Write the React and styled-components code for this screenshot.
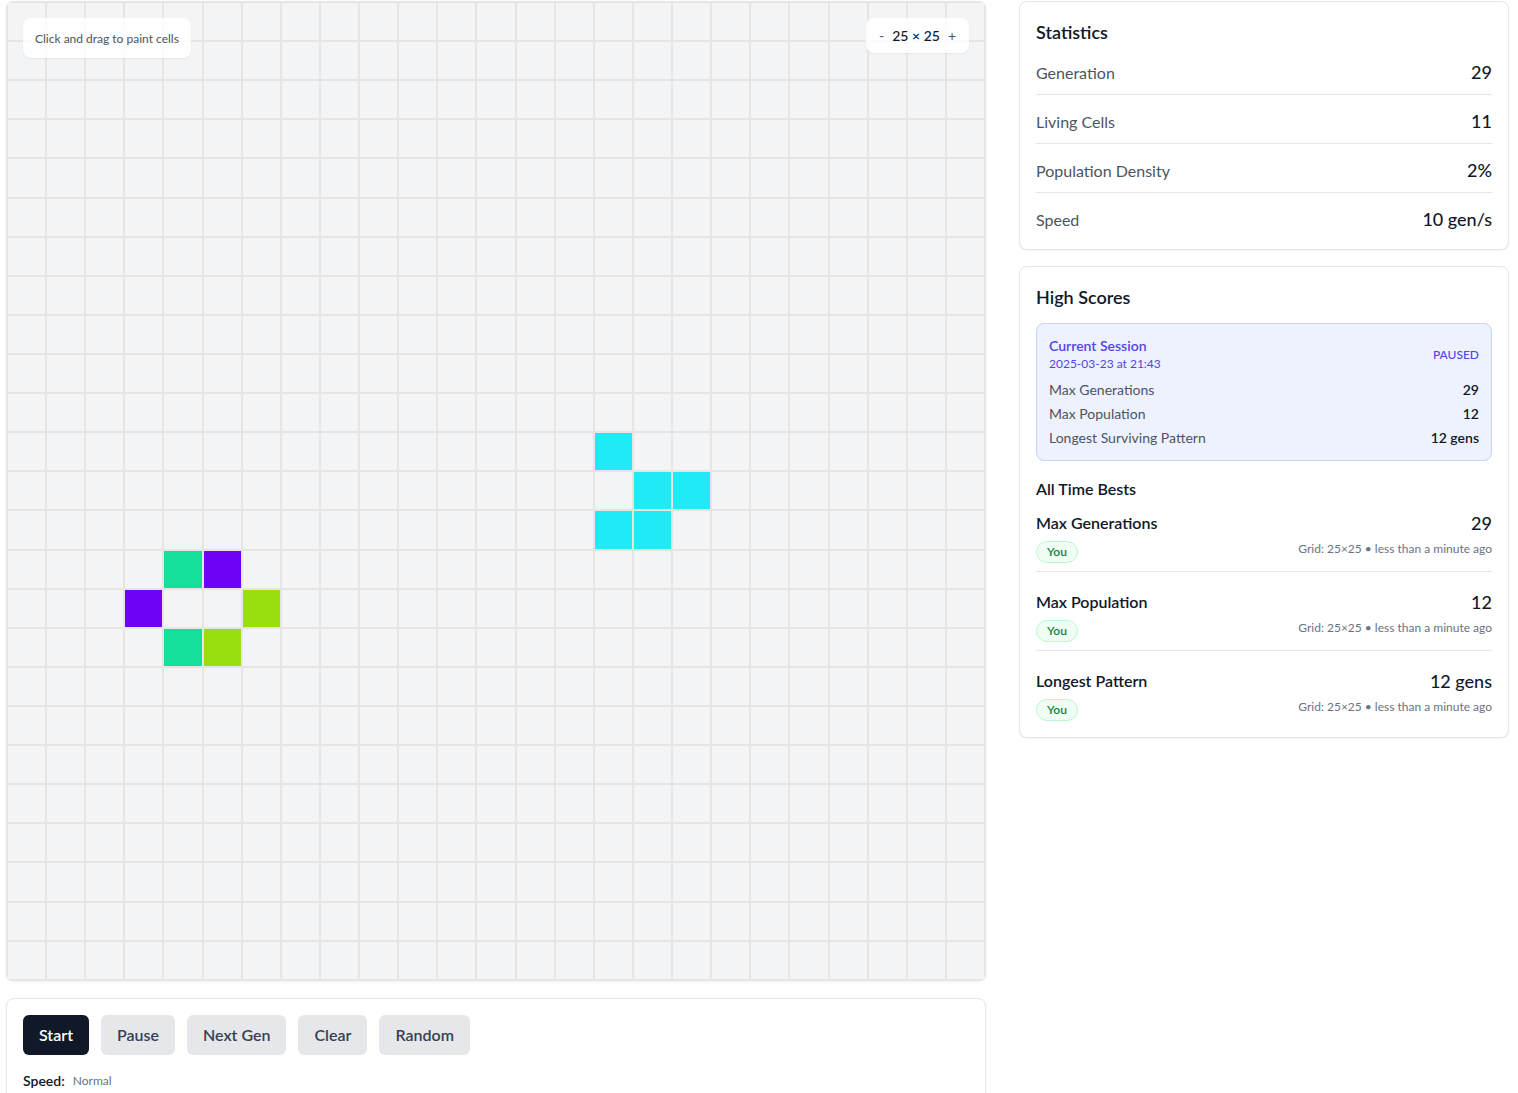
import React from 'react';
import styled, { createGlobalStyle } from 'styled-components';

const GlobalStyle = createGlobalStyle`
  * { box-sizing: border-box; }
  body {
    margin: 0;
    background: #fff;
    font-family: "Segoe UI", Lato, "Noto Sans", sans-serif;
    color: #111827;
  }
`;

const SIZE = 25;

const LIVE = {
  '11-15': '#20eaf5',
  '12-16': '#20eaf5',
  '12-17': '#20eaf5',
  '13-15': '#20eaf5',
  '13-16': '#20eaf5',
  '14-4': '#12e09b',
  '14-5': '#6e02f5',
  '15-3': '#6e02f5',
  '15-6': '#99df0f',
  '16-4': '#12e09b',
  '16-5': '#99df0f',
};

const stats = [
  { label: 'Generation', value: '29' },
  { label: 'Living Cells', value: '11' },
  { label: 'Population Density', value: '2%' },
  { label: 'Speed', value: '10 gen/s' },
];

const session = [
  { label: 'Max Generations', value: '29' },
  { label: 'Max Population', value: '12' },
  { label: 'Longest Surviving Pattern', value: '12 gens' },
];

const bests = [
  { title: 'Max Generations', value: '29' },
  { title: 'Max Population', value: '12' },
  { title: 'Longest Pattern', value: '12 gens' },
];

const App = () => {
  const cells = [];
  for (let r = 0; r < SIZE; r++) {
    for (let c = 0; c < SIZE; c++) {
      cells.push(<Cell key={`${r}-${c}`} color={LIVE[`${r}-${c}`]} />);
    }
  }

  return (
    <>
      <GlobalStyle />
      <Page>
        <Main>
          <Board>
            <Grid>{cells}</Grid>
            <Hint>Click and drag to paint cells</Hint>
            <SizeControl>
              <SizeBtn>-</SizeBtn>
              <SizeLabel>25 × 25</SizeLabel>
              <SizeBtn>+</SizeBtn>
            </SizeControl>
          </Board>
          <Controls>
            <ButtonRow>
              <Button primary>Start</Button>
              <Button>Pause</Button>
              <Button>Next Gen</Button>
              <Button>Clear</Button>
              <Button>Random</Button>
            </ButtonRow>
            <SpeedRow>
              <SpeedLabel>Speed:</SpeedLabel>
              <SpeedValue>Normal</SpeedValue>
            </SpeedRow>
          </Controls>
        </Main>
        <Side>
          <Card>
            <CardTitle>Statistics</CardTitle>
            <List>
              {stats.map((s) => (
                <StatRow key={s.label}>
                  <StatLabel>{s.label}</StatLabel>
                  <StatValue>{s.value}</StatValue>
                </StatRow>
              ))}
            </List>
          </Card>
          <Card>
            <CardTitle>High Scores</CardTitle>
            <Session>
              <SessionHead>
                <div>
                  <SessionTitle>Current Session</SessionTitle>
                  <SessionDate>2025-03-23 at 21:43</SessionDate>
                </div>
                <Status>PAUSED</Status>
              </SessionHead>
              <SessionList>
                {session.map((s) => (
                  <SessionRow key={s.label}>
                    <span>{s.label}</span>
                    <strong>{s.value}</strong>
                  </SessionRow>
                ))}
              </SessionList>
            </Session>
            <SubTitle>All Time Bests</SubTitle>
            <List>
              {bests.map((b) => (
                <Best key={b.title}>
                  <BestTop>
                    <BestTitle>{b.title}</BestTitle>
                    <BestValue>{b.value}</BestValue>
                  </BestTop>
                  <BestBottom>
                    <Badge>You</Badge>
                    <Meta>Grid: 25×25 • less than a minute ago</Meta>
                  </BestBottom>
                </Best>
              ))}
            </List>
          </Card>
        </Side>
      </Page>
    </>
  );
};

const Page = styled.div`
  display: flex;
  align-items: flex-start;
  gap: 33px;
  padding: 1px 9px 0 6px;
`;

const Main = styled.div`
  width: 980px;
  display: flex;
  flex-direction: column;
  gap: 17px;
`;

const Board = styled.div`
  position: relative;
`;

const Grid = styled.div`
  display: grid;
  grid-template-columns: repeat(${SIZE}, 1fr);
  grid-auto-rows: 37.12px;
  gap: 2px;
  padding: 2px;
  width: 980px;
  height: 980px;
  background: #e7e5e4;
  border-radius: 8px;
  overflow: hidden;
  box-shadow: 0 1px 3px rgba(0, 0, 0, 0.08);
`;

const Cell = styled.div`
  background: ${({ color }) => color || '#f3f4f6'};
`;

const Floating = styled.div`
  position: absolute;
  top: 17px;
  background: rgba(255, 255, 255, 0.85);
  border-radius: 8px;
  box-shadow: 0 1px 2px rgba(0, 0, 0, 0.06);
`;

const Hint = styled(Floating)`
  left: 17px;
  padding: 13px 12px 11px;
  font-size: 12px;
  line-height: 16px;
  color: #4b5563;
`;

const SizeControl = styled(Floating)`
  right: 17px;
  display: flex;
  align-items: center;
  gap: 7px;
  padding: 8px 12px 7px;
  font-size: 14px;
  line-height: 20px;
`;

const SizeBtn = styled.span`
  color: #4b5563;
  padding: 0 1px;
`;

const SizeLabel = styled.span`
  font-weight: 500;
  color: #111827;
`;

const Controls = styled.div`
  border: 1px solid #e5e7eb;
  border-radius: 8px;
  padding: 16px;
  box-shadow: 0 1px 2px rgba(0, 0, 0, 0.05);
`;

const ButtonRow = styled.div`
  display: flex;
  gap: 12px;
`;

const Button = styled.button`
  font-family: inherit;
  font-size: 16px;
  line-height: 24px;
  font-weight: 600;
  padding: 8px 16px;
  border: none;
  border-radius: 6px;
  background: ${({ primary }) => (primary ? '#111827' : '#e5e7eb')};
  color: ${({ primary }) => (primary ? '#ffffff' : '#374151')};
  cursor: pointer;
`;

const SpeedRow = styled.div`
  display: flex;
  align-items: center;
  gap: 8px;
  margin-top: 16px;
  line-height: 20px;
`;

const SpeedLabel = styled.span`
  font-size: 14px;
  font-weight: 600;
  color: #111827;
`;

const SpeedValue = styled.span`
  font-size: 12px;
  color: #6b7280;
`;

const Side = styled.div`
  width: 490px;
  display: flex;
  flex-direction: column;
  gap: 16px;
`;

const Card = styled.div`
  border: 1px solid #e5e7eb;
  border-radius: 8px;
  padding: 16px;
  background: #fff;
  box-shadow: 0 1px 2px rgba(0, 0, 0, 0.05);
`;

const CardTitle = styled.h2`
  margin: 0 0 12px;
  font-size: 18px;
  line-height: 28px;
  font-weight: 600;
  color: #111827;
`;

const List = styled.div`
  display: flex;
  flex-direction: column;
`;

const StatRow = styled.div`
  display: flex;
  justify-content: space-between;
  align-items: center;
  padding: 12px 0 8px;
  border-bottom: 1px solid #e5e7eb;

  &:first-child { padding-top: 0; }
  &:last-child { padding-bottom: 0; border-bottom: none; }
`;

const StatLabel = styled.span`
  font-size: 16px;
  color: #4b5563;
`;

const StatValue = styled.span`
  font-size: 18px;
  line-height: 28px;
  font-weight: 500;
  color: #111827;
`;

const Session = styled.div`
  background: #eef2ff;
  border: 1px solid #c7d2fe;
  border-radius: 8px;
  padding: 12px;
  margin-bottom: 16px;
`;

const SessionHead = styled.div`
  display: flex;
  justify-content: space-between;
  align-items: center;
`;

const SessionTitle = styled.div`
  font-size: 14px;
  line-height: 20px;
  font-weight: 600;
  color: #4f46e5;
`;

const SessionDate = styled.div`
  font-size: 12px;
  line-height: 16px;
  color: #4f46e5;
`;

const Status = styled.span`
  font-size: 12px;
  font-weight: 500;
  color: #4f46e5;
`;

const SessionList = styled.div`
  display: flex;
  flex-direction: column;
  gap: 4px;
  margin-top: 8px;
`;

const SessionRow = styled.div`
  display: flex;
  justify-content: space-between;
  font-size: 14px;
  line-height: 20px;
  color: #4b5563;

  strong {
    font-weight: 600;
    color: #111827;
  }
`;

const SubTitle = styled.h3`
  margin: 0 0 8px;
  font-size: 16px;
  line-height: 24px;
  font-weight: 600;
  color: #111827;
`;

const Best = styled.div`
  padding: 16px 0 8px;
  border-bottom: 1px solid #e5e7eb;

  &:first-child { padding-top: 0; }
  &:last-child { padding-bottom: 0; border-bottom: none; }
`;

const BestTop = styled.div`
  display: flex;
  justify-content: space-between;
  align-items: center;
`;

const BestTitle = styled.span`
  font-size: 16px;
  line-height: 24px;
  font-weight: 600;
  color: #111827;
`;

const BestValue = styled.span`
  font-size: 18px;
  line-height: 28px;
  font-weight: 500;
  color: #111827;
`;

const BestBottom = styled.div`
  display: flex;
  justify-content: space-between;
  align-items: flex-start;
  margin-top: 4px;
`;

const Badge = styled.span`
  font-size: 12px;
  line-height: 16px;
  font-weight: 600;
  padding: 2px 10px;
  border-radius: 999px;
  background: #f0fdf4;
  border: 1px solid #bbf7d0;
  color: #15803d;
`;

const Meta = styled.span`
  font-size: 12px;
  line-height: 16px;
  color: #6b7280;
`;

export default App;
